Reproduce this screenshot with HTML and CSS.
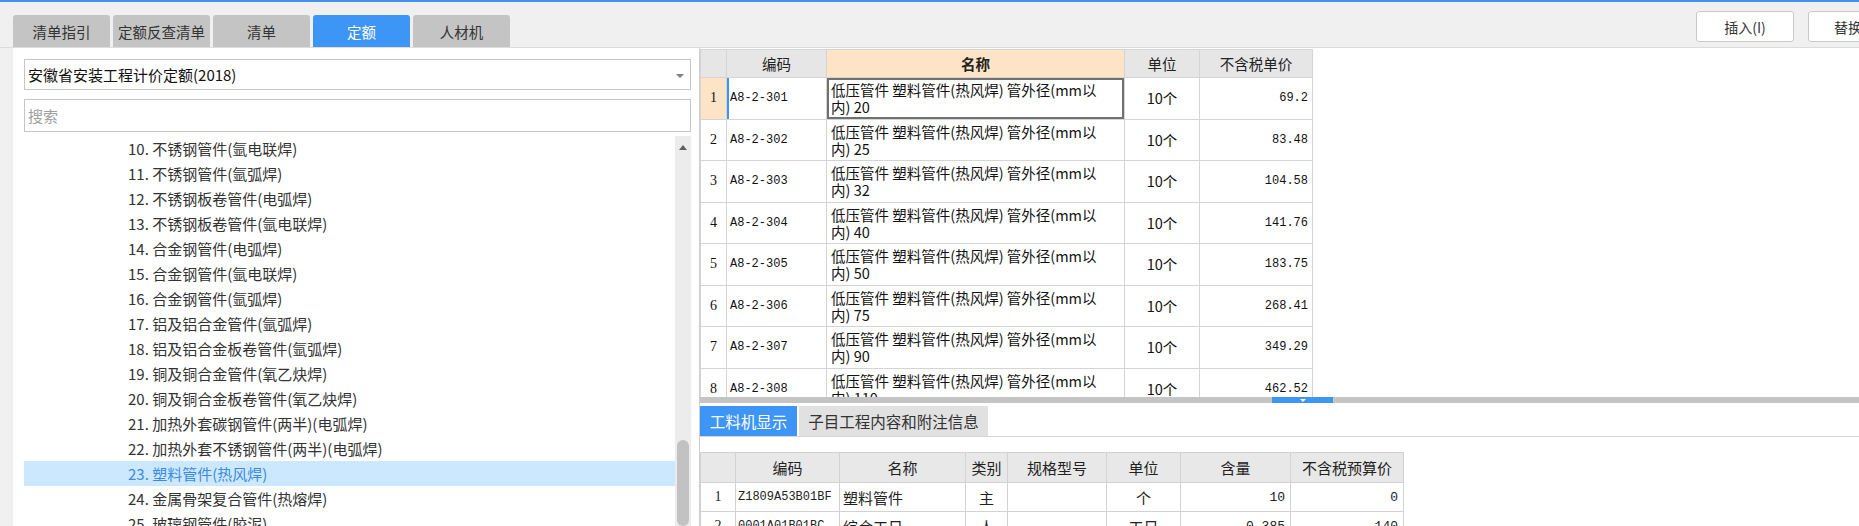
FILE: index.html
```html
<!DOCTYPE html>
<html lang="zh-CN">
<head>
<meta charset="utf-8">
<title>定额</title>
<link rel="stylesheet" href="styles.css">
</head>
<body>
<div class="topline"></div>
<div class="toolbar">
  <div class="tabs">
    <div class="tab">清单指引</div>
    <div class="tab">定额反查清单</div>
    <div class="tab">清单</div>
    <div class="tab active">定额</div>
    <div class="tab">人材机</div>
  </div>
  <div class="actions">
    <div class="btn">插入(I)</div>
    <div class="btn cut">替换</div>
  </div>
</div>
<div class="main">
  <div class="left">
    <div class="select"><span class="select-text">安徽省安装工程计价定额(2018)</span><span class="caret"></span></div>
    <div class="search">搜索</div>
    <div class="tree">
      <div class="tree-list">
        <div class="node">10. 不锈钢管件(氩电联焊)</div>
        <div class="node">11. 不锈钢管件(氩弧焊)</div>
        <div class="node">12. 不锈钢板卷管件(电弧焊)</div>
        <div class="node">13. 不锈钢板卷管件(氩电联焊)</div>
        <div class="node">14. 合金钢管件(电弧焊)</div>
        <div class="node">15. 合金钢管件(氩电联焊)</div>
        <div class="node">16. 合金钢管件(氩弧焊)</div>
        <div class="node">17. 铝及铝合金管件(氩弧焊)</div>
        <div class="node">18. 铝及铝合金板卷管件(氩弧焊)</div>
        <div class="node">19. 铜及铜合金管件(氧乙炔焊)</div>
        <div class="node">20. 铜及铜合金板卷管件(氧乙炔焊)</div>
        <div class="node">21. 加热外套碳钢管件(两半)(电弧焊)</div>
        <div class="node">22. 加热外套不锈钢管件(两半)(电弧焊)</div>
        <div class="node sel">23. 塑料管件(热风焊)</div>
        <div class="node">24. 金属骨架复合管件(热熔焊)</div>
        <div class="node">25. 玻璃钢管件(胶泥)</div>
      </div>
      <div class="vscroll">
        <span class="up"></span>
        <span class="thumb"></span>
      </div>
    </div>
  </div>
  <div class="right">
    <div class="upper">
      <table class="grid">
        <colgroup><col class="c-no"><col class="c-code"><col class="c-name"><col class="c-unit"><col class="c-price"></colgroup>
        <thead>
          <tr><th></th><th>编码</th><th class="hl">名称</th><th>单位</th><th>不含税单价</th></tr>
        </thead>
        <tbody>
          <tr><td class="no cur">1</td><td class="code curcode">A8-2-301</td><td class="name curname">低压管件 塑料管件(热风焊) 管外径(mm以<br>内) 20</td><td class="unit">10个</td><td class="price">69.2</td></tr>
          <tr><td class="no">2</td><td class="code">A8-2-302</td><td class="name">低压管件 塑料管件(热风焊) 管外径(mm以<br>内) 25</td><td class="unit">10个</td><td class="price">83.48</td></tr>
          <tr><td class="no">3</td><td class="code">A8-2-303</td><td class="name">低压管件 塑料管件(热风焊) 管外径(mm以<br>内) 32</td><td class="unit">10个</td><td class="price">104.58</td></tr>
          <tr><td class="no">4</td><td class="code">A8-2-304</td><td class="name">低压管件 塑料管件(热风焊) 管外径(mm以<br>内) 40</td><td class="unit">10个</td><td class="price">141.76</td></tr>
          <tr><td class="no">5</td><td class="code">A8-2-305</td><td class="name">低压管件 塑料管件(热风焊) 管外径(mm以<br>内) 50</td><td class="unit">10个</td><td class="price">183.75</td></tr>
          <tr><td class="no">6</td><td class="code">A8-2-306</td><td class="name">低压管件 塑料管件(热风焊) 管外径(mm以<br>内) 75</td><td class="unit">10个</td><td class="price">268.41</td></tr>
          <tr><td class="no">7</td><td class="code">A8-2-307</td><td class="name">低压管件 塑料管件(热风焊) 管外径(mm以<br>内) 90</td><td class="unit">10个</td><td class="price">349.29</td></tr>
          <tr><td class="no">8</td><td class="code">A8-2-308</td><td class="name">低压管件 塑料管件(热风焊) 管外径(mm以<br>内) 110</td><td class="unit">10个</td><td class="price">462.52</td></tr>
        </tbody>
      </table>
    </div>
    <div class="splitter"><span class="handle"><span class="down"></span></span></div>
    <div class="lower">
      <div class="subtabs">
        <div class="subtab active">工料机显示</div>
        <div class="subtab">子目工程内容和附注信息</div>
      </div>
      <div class="subgap"></div>
      <table class="sub">
        <colgroup><col class="s-no"><col class="s-code"><col class="s-name"><col class="s-type"><col class="s-spec"><col class="s-unit"><col class="s-qty"><col class="s-price"></colgroup>
        <thead>
          <tr><th></th><th>编码</th><th>名称</th><th>类别</th><th>规格型号</th><th>单位</th><th>含量</th><th>不含税预算价</th></tr>
        </thead>
        <tbody>
          <tr><td class="no">1</td><td class="code">Z1809A53B01BF</td><td>塑料管件</td><td class="ctr">主</td><td></td><td class="ctr">个</td><td class="num">10</td><td class="num">0</td></tr>
          <tr><td class="no">2</td><td class="code">0001A01B01BC</td><td>综合工日</td><td class="ctr">人</td><td></td><td class="ctr">工日</td><td class="num">0.385</td><td class="num">140</td></tr>
        </tbody>
      </table>
    </div>
  </div>
</div>
</body>
</html>
```
FILE: styles.css
```css
* { box-sizing: border-box; }
html, body {
  margin: 0;
  width: 1859px;
  height: 526px;
  overflow: hidden;
}
body {
  background: #f0f0f0;
  font-family: "Noto Sans CJK SC", "Microsoft YaHei", sans-serif;
  color: #333;
}
.topline { height: 2px; background: #4390ee; }

.toolbar { height: 45px; display: flex; }
.tabs {
  flex: 0 0 1696px;
  display: flex;
  align-items: flex-end;
  gap: 3px;
  padding: 13px 0 0 13px;
}
.tab {
  width: 97px;
  height: 32px;
  background: #c4c4c4;
  border-radius: 3px 3px 0 0;
  font-size: 14.5px;
  color: #333;
  display: flex;
  align-items: center;
  justify-content: center;
}
.tab.active { background: #3d95f5; color: #fff; }
.actions { display: flex; gap: 14px; padding-top: 9px; flex: none; }
.btn {
  flex: none;
  width: 98px;
  height: 31px;
  background: #fff;
  border: 1px solid #c9c9c9;
  border-radius: 3px;
  font-size: 14px;
  color: #333;
  display: flex;
  align-items: center;
  justify-content: center;
}
.btn.cut { width: 80px; }

.main {
  display: flex;
  height: 479px;
  border-top: 1px solid #dcdcdc;
}
.left {
  margin-left: 13px;
  width: 686px;
  flex: none;
  background: #fff;
  padding: 11px 8px 0 11px;
  display: flex;
  flex-direction: column;
}
.select {
  height: 31px;
  border: 1px solid #c6c6c6;
  font-size: 15px;
  color: #111;
  padding: 0 6px 0 3px;
  display: flex;
  align-items: center;
}
.select-text { flex: 1; }
.caret {
  width: 0; height: 0;
  border-left: 4px solid transparent;
  border-right: 4px solid transparent;
  border-top: 4px solid #808080;
  margin-top: 2px;
}
.search {
  margin-top: 9px;
  height: 33px;
  border: 1px solid #c6c6c6;
  font-size: 15px;
  color: #a0a0a0;
  padding-left: 3px;
  display: flex;
  align-items: center;
}
.tree { margin-top: 4px; flex: 1; display: flex; overflow: hidden; }
.tree-list { flex: 1; overflow: hidden; }
.node {
  height: 25px;
  line-height: 25px;
  padding-left: 104px;
  font-size: 15px;
  color: #333;
  white-space: nowrap;
}
.node.sel { background: #cce8ff; color: #3a8be0; }
.vscroll {
  width: 16px;
  flex: none;
  background: #ececec;
  display: flex;
  flex-direction: column;
  align-items: center;
}
.up {
  margin-top: 9px;
  width: 0; height: 0;
  border-left: 4px solid transparent;
  border-right: 4px solid transparent;
  border-bottom: 5px solid #606060;
}
.thumb {
  margin-top: 290px;
  width: 12px;
  height: 140px;
  border-radius: 6px;
  background: #c2c2c2;
}

.right {
  flex: 1;
  border-left: 1px solid #cfcfcf;
  background: #fff;
  display: flex;
  flex-direction: column;
  min-width: 0;
}
.upper { height: 349px; padding-top: 1px; overflow: hidden; flex: none; }
table { border-collapse: collapse; table-layout: fixed; }
.grid { width: 612px; }
.c-no { width: 26px; }
.c-code { width: 100px; }
.c-name { width: 298px; }
.c-unit { width: 75px; }
.c-price { width: 113px; }
.grid th, .grid td { border: 1px solid #d4d4d4; padding: 0; }
.grid th {
  height: 28px;
  background: #e6e6e6;
  font-weight: normal;
  font-size: 14.5px;
  color: #222;
}
.grid th.hl { background: #fde4c6; font-weight: bold; }
.grid td { height: 41.5px; color: #111; font-size: 14.5px; line-height: 18px; }
.grid td.no {
  text-align: center;
  font-family: "Liberation Serif", serif;
  font-size: 14px;
}
.grid td.no.cur { background: #fde4c6; }
.grid td.code {
  font-family: "Liberation Mono", monospace;
  font-size: 12px;
  padding-left: 3px;
}
.grid td.curcode { box-shadow: inset 2px 0 0 #3d95f5; }
.grid td.name {
  line-height: 17px;
  padding: 0 0 0 4px;
  white-space: nowrap;
  overflow: hidden;
}
.grid td.curname { box-shadow: inset 0 0 0 2px #707070; }
.grid td.unit { text-align: center; }
.grid td.price {
  text-align: right;
  font-family: "Liberation Mono", monospace;
  font-size: 12px;
  padding-right: 4px;
}

.splitter {
  height: 6px;
  flex: none;
  background: #c4c4c4;
  display: flex;
  padding-left: 572px;
}
.handle {
  width: 61px;
  background: #3d95f5;
  display: flex;
  justify-content: center;
  align-items: center;
}
.down {
  width: 0; height: 0;
  border-left: 3px solid transparent;
  border-right: 3px solid transparent;
  border-top: 3px solid #fff;
}
.lower { flex: 1; padding-top: 3px; overflow: hidden; }
.subtabs {
  display: flex;
  gap: 2px;
  height: 31px;
  border-bottom: 1px solid #d6d6d6;
}
.subtab {
  height: 30px;
  width: 189px;
  background: #e1e1e1;
  font-size: 15.5px;
  color: #333;
  display: flex;
  align-items: center;
  justify-content: center;
}
.subtab.active { width: 97px; background: #3d95f5; color: #fff; }
.subgap { height: 15px; }
.sub { width: 703px; }
.s-no { width: 35px; }
.s-code { width: 104px; }
.s-name { width: 126px; }
.s-type { width: 42px; }
.s-spec { width: 99px; }
.s-unit { width: 74px; }
.s-qty { width: 110px; }
.s-price { width: 113px; }
.sub th, .sub td { border: 1px solid #d2d2d2; padding: 0; font-size: 15px; color: #222; }
.sub th { height: 30px; background: #e8e8e8; font-weight: normal; }
.sub td { height: 29px; padding-left: 3px; white-space: nowrap; overflow: hidden; }
.sub td.no { text-align: center; padding: 0; font-family: "Liberation Serif", serif; font-size: 14px; }
.sub td.code { font-family: "Liberation Mono", monospace; font-size: 12px; padding-left: 2px; }
.sub td.ctr { text-align: center; padding: 0; }
.sub td.num { text-align: right; padding: 0 5px 0 0; font-family: "Liberation Mono", monospace; font-size: 13px; }
```
